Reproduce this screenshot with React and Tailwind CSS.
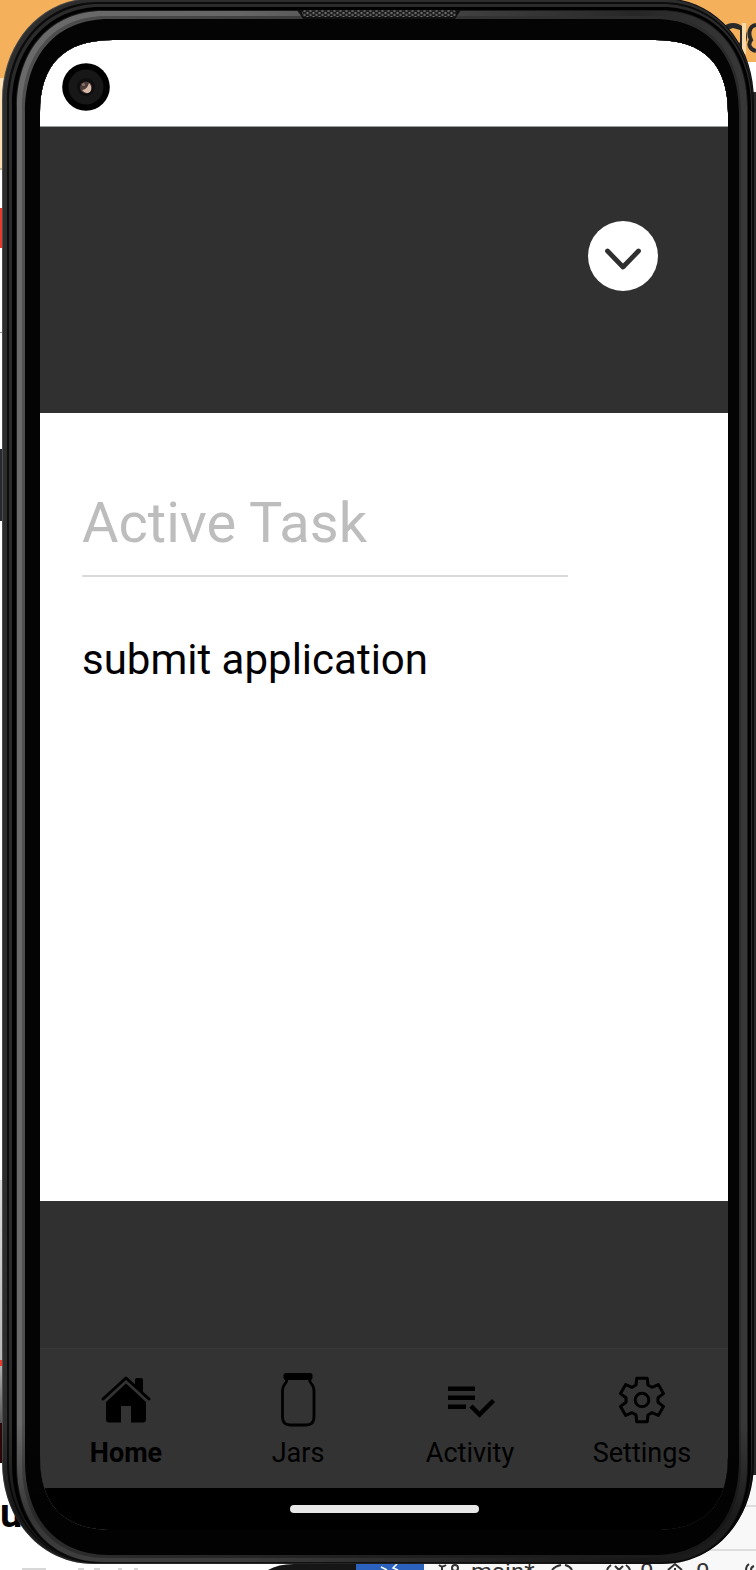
import React from "react";

/* Closed outline with rounded corners; k sets how square the corners are. */
function outline(l, t, r, b, rx, ry = rx, k = 0.33) {
  const kx = rx * k;
  const ky = ry * k;
  return [
    `M${l} ${t + ry}`,
    `C${l} ${t + ky} ${l + kx} ${t} ${l + rx} ${t}`,
    `H${r - rx}`,
    `C${r - kx} ${t} ${r} ${t + ky} ${r} ${t + ry}`,
    `V${b - ry}`,
    `C${r} ${b - ky} ${r - kx} ${b} ${r - rx} ${b}`,
    `H${l + rx}`,
    `C${l + kx} ${b} ${l} ${b - ky} ${l} ${b - ry}`,
    "Z",
  ].join(" ");
}

const SCREEN = outline(40, 40, 728, 1530, 73);
const BODY = outline(2, -2, 754, 1564, 92, 102, 0.43);

const RINGS = [
  { d: BODY, fill: "url(#edge)" },
  { d: outline(3, -1, 753, 1563, 91, 101, 0.43), fill: "#2d2d2d" },
  { d: outline(7, 2, 753, 1563, 90, 100, 0.43), fill: "#0c0c0c" },
  { d: outline(9, 4, 752, 1563, 90, 100, 0.42), fill: "#2b2b2b" },
  { d: outline(12, 7, 751, 1563, 88, 98, 0.42), fill: "#000000" },
  { d: outline(16, 10, 748, 1563, 87, 97, 0.4), fill: "#1c1c1c" },
  { d: outline(17, 11, 747, 1562, 86, 96, 0.4), fill: "url(#rim)" },
  { d: outline(22, 16, 741, 1558, 84, 94, 0.39), fill: "url(#rimInner)" },
  { d: outline(25, 19, 739, 1555, 84, 94, 0.38), fill: "#040404" },
];

function PhoneFrame() {
  return (
    <svg
      className="pointer-events-none absolute inset-0 z-10 h-full w-full"
      viewBox="0 0 756 1570"
      preserveAspectRatio="none"
      aria-hidden="true"
    >
      <defs>
        <linearGradient id="edge" x1="0" x2="1" y1="0" y2="0">
          <stop offset="0" stopColor="#4c4c4c" />
          <stop offset="0.5" stopColor="#3a3a3a" />
          <stop offset="1" stopColor="#0c0c0c" />
        </linearGradient>
        <linearGradient id="rim" x1="0" x2="1" y1="0" y2="0">
          <stop offset="0" stopColor="#6a6a6a" />
          <stop offset="0.3" stopColor="#666666" />
          <stop offset="0.5" stopColor="#4c4c4c" />
          <stop offset="0.85" stopColor="#262626" />
          <stop offset="1" stopColor="#383838" />
        </linearGradient>
        <linearGradient id="rimInner" x1="0" x2="1" y1="0" y2="0">
          <stop offset="0" stopColor="#505050" />
          <stop offset="0.5" stopColor="#363636" />
          <stop offset="1" stopColor="#2a2a2a" />
        </linearGradient>
        <linearGradient id="shade" x1="0" x2="0" y1="0" y2="1">
          <stop offset="0" stopColor="#000000" stopOpacity="0" />
          <stop offset="0.91" stopColor="#000000" stopOpacity="0" />
          <stop offset="0.97" stopColor="#000000" stopOpacity="0.5" />
          <stop offset="1" stopColor="#000000" stopOpacity="0.4" />
        </linearGradient>
        <pattern id="mesh" width="6" height="4" patternUnits="userSpaceOnUse">
          <rect width="6" height="4" fill="#1c1c1c" />
          <circle cx="1.5" cy="1" r="1.2" fill="#6c6c6c" />
          <circle cx="4.5" cy="3" r="1.2" fill="#606060" />
        </pattern>
      </defs>
      {RINGS.map((ring) => (
        <path key={ring.d} d={`${ring.d} ${SCREEN}`} fill={ring.fill} fillRule="evenodd" />
      ))}
      <path d={`${BODY} ${SCREEN}`} fill="url(#shade)" fillRule="evenodd" />
      <path d="M297 10H461L455 19H303Z" fill="#111111" />
      <rect x="302" y="10" width="154" height="7" rx="3" fill="url(#mesh)" />
    </svg>
  );
}

/* Parts of the desktop that show around the phone. */
function Desktop() {
  return (
    <div className="absolute inset-0 flex flex-col overflow-hidden bg-white" aria-hidden="true">
      <div className="flex flex-1 justify-between">
        <div className="flex w-1/2 flex-col">
          <div className="h-[78px] bg-[#f4b05a]" />
          <div className="h-[92px] border-b-2 border-[#c8b89a] bg-[#fce0b4]" />
          <div className="mt-[38px] h-10 bg-[#e93a2c]" />
          <div className="mt-[84px] h-px bg-[#999999]" />
          <div className="mt-[116px] h-[72px] bg-[#252a31]" />
          <div className="flex-1" />
          <div className="h-[180px] bg-linear-to-b from-[#dddddd] to-[#b8b8b8]" />
          <div className="h-1.5 bg-[#e93a2c]" />
          <div className="h-[57px] bg-linear-to-b from-[#b0b0b0] to-[#555555]" />
          <div className="h-10 w-[3px] bg-[#2a0808]" />
          <div className="h-[99px] pt-[27px] text-[40px] leading-[48px] font-bold text-black">u</div>
        </div>
        <div className="flex w-1/2 flex-col">
          <div className="flex h-[62px] justify-end bg-[#f4b05a] pt-5">
            <svg className="size-9" viewBox="0 0 36 36" fill="none">
              <circle cx="13" cy="17" r="14" fill="#26282a" />
              <path d="M5 11L13 8L20 10L20 22L14 29L9 24Z" fill="#f4b05a" />
              <path d="M24 3V34" stroke="#f8d9a8" strokeWidth="4" />
              <path d="M36 5C29 6 28 14 31 20C28 24 29 29 36 31" stroke="#26282a" strokeWidth="4" />
            </svg>
          </div>
          <div className="h-[30px]" />
          <div className="flex-1 bg-[#2a2a2a]" />
          <div className="h-8 border-b-2 border-[#dddddd] bg-[#f8f8f8]" />
          <div className="h-11 border-b-2 border-[#dddddd] bg-[#f8f8f8]" />
          <div className="h-[11px] bg-[#f8f8f8]" />
        </div>
      </div>
      <div className="flex h-2 overflow-hidden text-[24px] leading-5 text-[#333333]">
        <svg className="h-2 w-[424px] shrink-0" viewBox="0 0 424 8">
          <path d="M22 7H46M78 7H84M94 7H100M118 7H122M134 7H138" stroke="#d8d8d8" strokeWidth="2" />
          <path d="M268 8Q278 2 294 2H356V8Z" fill="#161616" />
          <rect x="356" width="68" height="8" fill="#2a62bd" />
          <path d="M381 5L387 8M397 2L393 6L398 8" stroke="#ffffff" strokeWidth="1.5" fill="none" />
        </svg>
        <div className="flex flex-1 bg-[#f8f8f8]">
          <svg
            className="h-2 w-[47px] shrink-0"
            viewBox="0 0 47 8"
            fill="none"
            stroke="#333333"
            strokeWidth="2"
          >
            <path d="M15 3Q18 6 22 3M18 4V8" />
            <circle cx="31" cy="6" r="3" />
          </svg>
          <span className="w-[72px]">main*</span>
          <svg
            className="h-2 w-[97px] shrink-0"
            viewBox="0 0 97 8"
            fill="none"
            stroke="#333333"
            strokeWidth="2"
          >
            <path d="M9 8Q12 4 18 3M22 3Q27 4 29 8M64 8Q65 5 68 3M83 3Q86 5 87 8M72 4L76 8M80 4L76 8" />
          </svg>
          <span className="w-5">0</span>
          <svg
            className="h-2 w-9 shrink-0"
            viewBox="0 0 36 8"
            fill="none"
            stroke="#333333"
            strokeWidth="2"
          >
            <path d="M8 8L15 2L22 8M15 6V8" />
          </svg>
          <span className="flex-1">0</span>
          <svg
            className="h-2 w-4 shrink-0"
            viewBox="0 0 16 8"
            fill="none"
            stroke="#333333"
            strokeWidth="2"
          >
            <path d="M6 8Q6 4 9 2M11 8Q11 5 14 4" />
          </svg>
        </div>
      </div>
    </div>
  );
}

function Camera() {
  return (
    <svg className="size-12" viewBox="0 0 48 48" aria-hidden="true">
      <circle cx="24" cy="24" r="23.8" fill="#000000" />
      <circle cx="24" cy="24" r="17.5" fill="#171717" />
      <circle cx="24" cy="24" r="9" fill="#0f0d0d" />
      <circle cx="24" cy="24.5" r="6" fill="#4a3a38" />
      <path d="M20 27Q25 27 27 20Q31 24 28 29Q24 32 20 27Z" fill="#d9b9a8" />
      <circle cx="21.5" cy="21.5" r="1.6" fill="#8c726c" />
    </svg>
  );
}

function HomeIcon() {
  return (
    <svg className="size-14" viewBox="0 0 56 56" aria-hidden="true">
      <path d="M37 9Q37 7 39 7H43Q45 7 45 9V21.5L37 14Z" />
      <path
        d="M5 28L28 7L51 28"
        fill="none"
        stroke="#000000"
        strokeWidth="3"
        strokeLinecap="round"
        strokeLinejoin="round"
      />
      <path d="M28 12.500L48 31V48.500Q48 51.500 45 51.500H33V35H23V51.500H11Q8 51.500 8 48.500V31Z" />
    </svg>
  );
}

function JarIcon() {
  return (
    <svg className="size-14" viewBox="0 0 56 56" aria-hidden="true">
      <rect x="13.5" y="2" width="29" height="7" rx="2.5" />
      <path
        d="M17 8.500C17 13 12.500 13 12.500 19V46Q12.500 54 20.500 54H36Q44 54 44 46V19C44 13 39.500 13 39.500 8.500"
        fill="none"
        stroke="#000000"
        strokeWidth="2.8"
      />
    </svg>
  );
}

function ActivityIcon() {
  return (
    <svg className="size-14" viewBox="0 0 56 56" aria-hidden="true">
      <path d="M6 15.500H33V20H6ZM6 24.500H33V29H6ZM6 33.500H24V38H6Z" />
      <path d="M29 35L37.500 43.500L51.500 29.500" fill="none" stroke="#000000" strokeWidth="4.5" />
    </svg>
  );
}

const TOOTH = [
  [-9.3, -13],
  [-6, -15],
  [-5.2, -21.8],
  [5.2, -21.8],
  [6, -15],
];

const GEAR = [0, 60, 120, 180, 240, 300]
  .flatMap((deg) => {
    const a = (deg * Math.PI) / 180;
    return TOOTH.map(([x, y]) => {
      const px = 28 + x * Math.cos(a) - y * Math.sin(a);
      const py = 29 + x * Math.sin(a) + y * Math.cos(a);
      return `${px.toFixed(2)},${py.toFixed(2)}`;
    });
  })
  .join(" ");

function SettingsIcon() {
  return (
    <svg
      className="size-14"
      viewBox="0 0 56 56"
      fill="none"
      stroke="#000000"
      strokeWidth="3"
      strokeLinejoin="round"
      aria-hidden="true"
    >
      <polygon points={GEAR} />
      <circle cx="28" cy="29" r="6.8" />
    </svg>
  );
}

const TABS = [
  { label: "Home", Icon: HomeIcon, active: true },
  { label: "Jars", Icon: JarIcon },
  { label: "Activity", Icon: ActivityIcon },
  { label: "Settings", Icon: SettingsIcon },
];

export default function App() {
  return (
    <div className="relative isolate flex min-h-screen flex-col overflow-hidden font-['Roboto','Liberation_Sans',sans-serif]">
      <Desktop />
      <PhoneFrame />
      <div className="relative flex flex-1 flex-col pt-10 pr-7 pb-10 pl-10">
        <div className="h-[86px] bg-white px-[22px] pt-[23px]">
          <Camera />
        </div>

        <header className="flex h-[287px] justify-end border-t border-[#9aa09c] bg-[#303030] pt-[94px] pr-[70px]">
          <button type="button" aria-label="Close task" className="size-[70px] rounded-full bg-white">
            <svg viewBox="0 0 70 70" fill="none" aria-hidden="true">
              <path
                d="M19.500 30L35 46L50.500 30"
                stroke="#303030"
                strokeWidth="4.8"
                strokeLinecap="round"
                strokeLinejoin="round"
              />
            </svg>
          </button>
        </header>

        <main className="flex-1 bg-white pt-[76px] pr-40 pl-[42px]">
          <h1 className="border-b-2 border-[#dadada] pb-[18px] text-[56px] leading-[68px] text-[#bdbdbd]">
            Active Task
          </h1>
          <p className="pt-[58px] text-[42px] leading-[50px] text-black">submit application</p>
        </main>

        <div className="h-[147px] bg-[#303030]" />

        <nav aria-label="Main" className="grid h-[140px] grid-cols-4 border-t border-[#373737] bg-[#333333]">
          {TABS.map(({ label, Icon, active }) => (
            <a
              key={label}
              href="#"
              aria-current={active ? "page" : undefined}
              className={`flex flex-col items-center gap-[10px] pt-[22px] text-[27px] leading-8 text-black ${
                active ? "font-bold" : "font-normal"
              }`}
            >
              <Icon />
              <span>{label}</span>
            </a>
          ))}
        </nav>

        <div className="flex h-[42px] justify-center bg-black pt-[17px]">
          <div className="h-2 w-[189px] rounded-full bg-[#e8e8e8]" />
        </div>
      </div>
    </div>
  );
}
